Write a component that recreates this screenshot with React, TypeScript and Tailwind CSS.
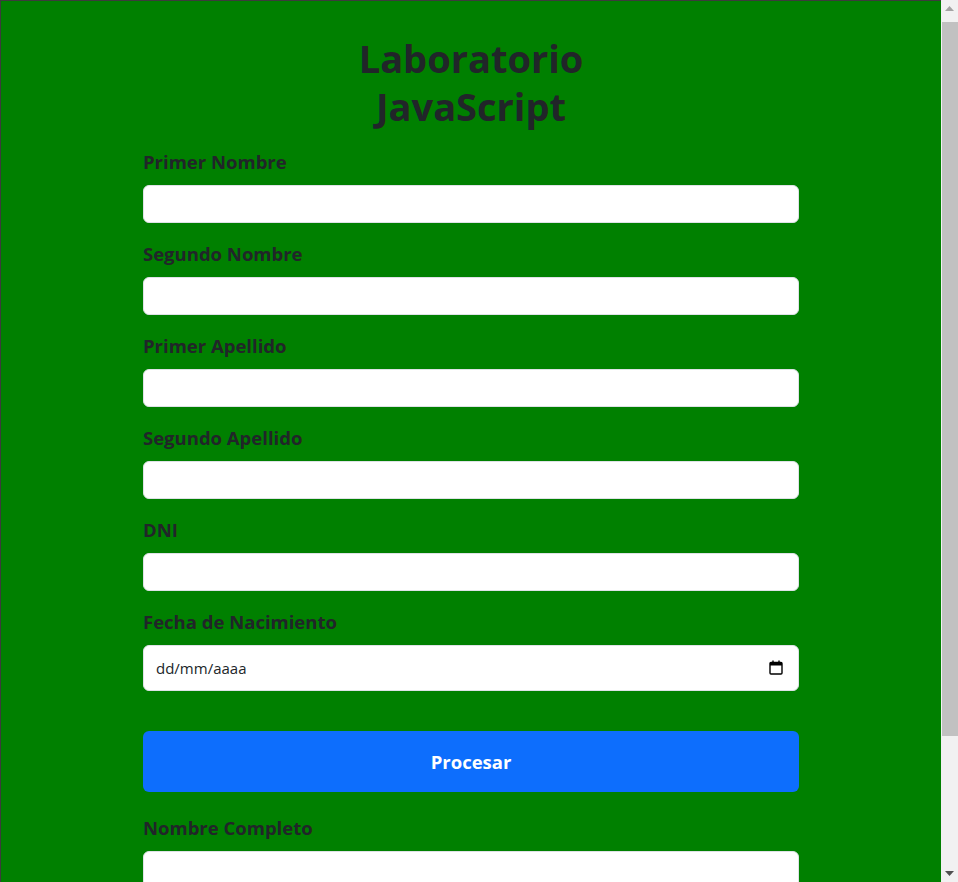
import React from 'react';

const fields = ['Primer Nombre', 'Segundo Nombre', 'Primer Apellido', 'Segundo Apellido', 'DNI'];

const CalendarIcon = () => (
  <svg width="14" height="15" viewBox="0 0 14 15" fill="none">
    <rect x="1" y="2.5" width="12" height="11.5" rx="1" stroke="#000" strokeWidth="1.4" />
    <rect x="1" y="2.5" width="12" height="3" fill="#000" />
    <rect x="3.3" y="0.5" width="1.4" height="3" fill="#000" />
    <rect x="9.3" y="0.5" width="1.4" height="3" fill="#000" />
  </svg>
);

// classic window scrollbar seen at the right edge of the screenshot
const Scrollbar = () => (
  <div className="w-[17px] shrink-0 bg-[#f1f1f1] flex flex-col">
    <div className="h-[17px] flex items-center justify-center">
      <svg width="9" height="5" viewBox="0 0 9 5">
        <polygon points="4.5,0 9,5 0,5" fill="#a3a3a3" />
      </svg>
    </div>
    <div className="flex-1 pt-[5px] pl-[1px]">
      <div className="h-[714px] bg-[#c1c1c1]" />
    </div>
    <div className="h-[17px] flex items-center justify-center">
      <svg width="9" height="5" viewBox="0 0 9 5">
        <polygon points="0,0 9,0 4.5,5" fill="#505050" />
      </svg>
    </div>
  </div>
);

export default function App() {
  return (
    <div className="h-screen flex overflow-hidden text-[#212529] font-['Open_Sans',sans-serif]">
      <main className="flex-1 overflow-hidden bg-[#008000] border-t border-l border-[#3c3c3c]">
        <div className="w-[656px] mx-auto pt-[33px] pb-6">
          <h1 className="text-[38px] leading-[48px] font-bold text-center mb-[17px]">
            Laboratorio
            <br />
            JavaScript
          </h1>

          {fields.map((f) => (
            <div key={f} className="mb-4">
              <label className="block text-[18.5px] leading-[30px] font-bold mb-2">{f}</label>
              <input
                type="text"
                className="block w-full h-[38px] bg-white rounded-[6px] border border-[#dee2e6] px-3 outline-none"
              />
            </div>
          ))}

          <div className="mb-[40px]">
            <label className="block text-[18.5px] leading-[30px] font-bold mb-2">Fecha de Nacimiento</label>
            <div className="relative">
              <input
                type="text"
                placeholder="dd/mm/aaaa"
                className="block w-full h-[46px] bg-white rounded-[6px] border border-[#dee2e6] pl-3 pr-10 text-[15px] outline-none placeholder:text-[#212529]"
              />
              <span className="absolute right-[16px] top-[15px] flex">
                <CalendarIcon />
              </span>
            </div>
          </div>

          <button className="block w-full h-[61px] bg-[#0d6efd] rounded-[6px] text-white text-[18.5px] font-bold mb-[21px]">
            Procesar
          </button>

          <div className="mb-4">
            <label className="block text-[18.5px] leading-[30px] font-bold mb-2">Nombre Completo</label>
            <input
              type="text"
              className="block w-full h-[38px] bg-white rounded-[6px] border border-[#dee2e6] px-3 outline-none"
            />
          </div>
        </div>
      </main>
      <Scrollbar />
    </div>
  );
}
